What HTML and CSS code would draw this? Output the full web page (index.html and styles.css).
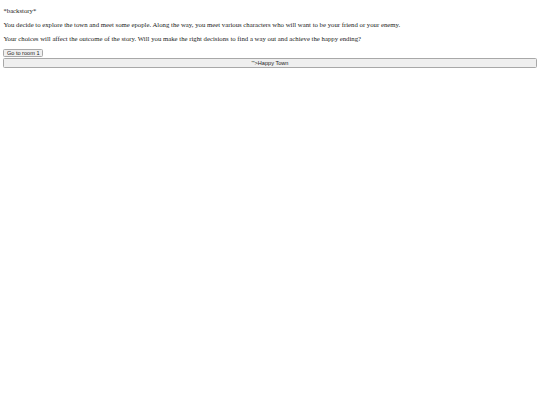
FILE: index.html
```html
<!DOCTYPE html>
<html>
<head>
<meta charset="utf-8">
<title>Happy Town</title>
<link rel="stylesheet" href="styles.css">
</head>
<body>
<p class="story">*backstory*</p>
<p class="story">You decide to explore the town and meet some epople. Along the way, you meet various characters who will want to be your friend or your enemy.</p>
<p class="story">Your choices will affect the outcome of the story. Will you make the right decisions to find a way out and achieve the happy ending?</p>
<button class="btn">Go to room 1</button>
<button class="btn btn-wide">'"&gt;Happy Town</button>
</body>
</html>
```
FILE: styles.css
```css
html {
  background: #fff;
}

body {
  margin: 0;
  padding: 7.4px 3.375px;
  font-family: "Liberation Serif", "Times New Roman", serif;
  font-size: 6.75px;
  color: #222;
}

.story {
  margin: 6.75px 0;
}

.story:first-child {
  margin-top: 0;
}

.btn {
  display: block;
  box-sizing: border-box;
  margin: 7px 0 0;
  padding: 0 2.5px;
  font-family: "Liberation Sans", Arial, sans-serif;
  font-size: 5.6px;
  line-height: 6.6px;
  color: #222;
  background: #efefef;
  border: 1px solid #a8a8a8;
  border-radius: 1.5px;
  text-align: center;
}

.btn-wide {
  width: 100%;
  margin-top: 0.6px;
  padding: 0.5px 2.5px;
}
```
